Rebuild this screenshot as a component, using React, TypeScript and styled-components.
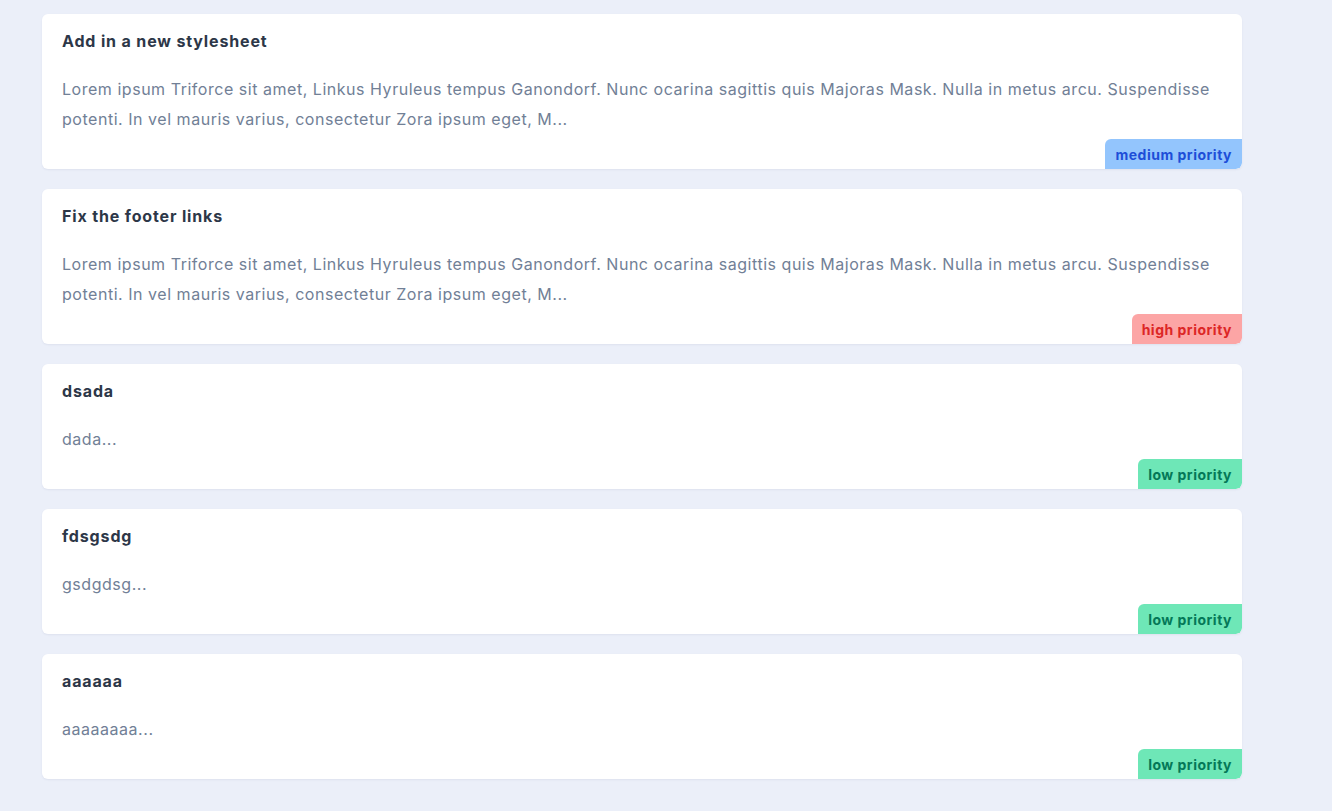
import React from 'react';
import styled, { createGlobalStyle } from 'styled-components';

type Priority = 'low' | 'medium' | 'high';

interface Task {
  id: number;
  title: string;
  body: string;
  priority: Priority;
}

const LOREM =
  'Lorem ipsum Triforce sit amet, Linkus Hyruleus tempus Ganondorf. Nunc ocarina sagittis quis Majoras Mask. Nulla in metus arcu. Suspendisse potenti. In vel mauris varius, consectetur Zora ipsum eget, M';

const tasks: Task[] = [
  { id: 1, title: 'Add in a new stylesheet', body: LOREM, priority: 'medium' },
  { id: 2, title: 'Fix the footer links', body: LOREM, priority: 'high' },
  { id: 3, title: 'dsada', body: 'dada', priority: 'low' },
  { id: 4, title: 'fdsgsdg', body: 'gsdgdsg', priority: 'low' },
  { id: 5, title: 'aaaaaa', body: 'aaaaaaaa', priority: 'low' },
];

const badgeColors: Record<Priority, { bg: string; fg: string }> = {
  low: { bg: '#6ee7b7', fg: '#047857' },
  medium: { bg: '#93c5fd', fg: '#1d4ed8' },
  high: { bg: '#fca5a5', fg: '#dc2626' },
};

// ── Styles ───────────────────────────────────────────────────────────────────

const GlobalStyle = createGlobalStyle`
  html, body {
    margin: 0;
    padding: 0;
    background: #ebeff9;
  }
  body {
    font-family: Inter, 'Noto Sans', sans-serif;
    -webkit-font-smoothing: antialiased;
  }
`;

const Page = styled.main`
  min-height: 811px;
  padding: 14px 0 0 42px;
  box-sizing: border-box;
`;

const List = styled.div`
  width: 1200px;
  display: flex;
  flex-direction: column;
  gap: 20px;
`;

const Card = styled.article`
  background: #fff;
  border-radius: 6px;
  box-shadow: 0 1px 2px rgba(60, 72, 110, 0.08);
  padding-top: 15px;
  overflow: hidden;
`;

const Content = styled.div`
  padding: 0 20px;
`;

const Title = styled.h3`
  margin: 0;
  font-size: 16px;
  line-height: 24px;
  font-weight: 700;
  letter-spacing: 0.85px;
  color: #2d3748;
`;

const Body = styled.p`
  margin: 21px 0 0;
  font-size: 16px;
  line-height: 30px;
  letter-spacing: 0.53px;
  color: #718096;
`;

const Footer = styled.div`
  display: flex;
  justify-content: flex-end;
  margin-top: 5px;
`;

const Badge = styled.span<{ $priority: Priority }>`
  height: 30px;
  display: flex;
  align-items: center;
  padding: 0 10px;
  font-size: 14px;
  font-weight: 700;
  letter-spacing: 0.5px;
  border-radius: 6px 0 6px 0;
  background: ${p => badgeColors[p.$priority].bg};
  color: ${p => badgeColors[p.$priority].fg};
`;

// ── Component ────────────────────────────────────────────────────────────────

export default function App() {
  return (
    <>
      <GlobalStyle />
      <Page>
        <List>
          {tasks.map(t => (
            <Card key={t.id}>
              <Content>
                <Title>{t.title}</Title>
                <Body>{`${t.body}...`}</Body>
              </Content>
              <Footer>
                <Badge $priority={t.priority}>{`${t.priority} priority`}</Badge>
              </Footer>
            </Card>
          ))}
        </List>
      </Page>
    </>
  );
}
